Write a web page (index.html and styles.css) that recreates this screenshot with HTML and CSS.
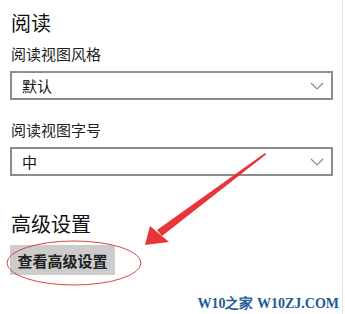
FILE: index.html
```html
<!DOCTYPE html>
<html lang="zh">
<head>
<meta charset="utf-8">
<link rel="stylesheet" href="styles.css">
</head>
<body>
<div class="page">
  <h1 class="heading">阅读</h1>
  <div class="label">阅读视图风格</div>
  <div class="select">
    <span class="value">默认</span>
    <svg class="chev" width="14" height="8" viewBox="0 0 14 8"><polyline points="1,1 7,7 13,1" fill="none" stroke="#8a8a8a" stroke-width="1.2"/></svg>
  </div>
  <div class="label label2">阅读视图字号</div>
  <div class="select">
    <span class="value">中</span>
    <svg class="chev" width="14" height="8" viewBox="0 0 14 8"><polyline points="1,1 7,7 13,1" fill="none" stroke="#8a8a8a" stroke-width="1.2"/></svg>
  </div>
  <h2 class="heading heading2">高级设置</h2>
  <button class="btn">查看高级设置</button>
  <div class="watermark">W10之家 W10ZJ.COM</div>
  <svg class="annot" width="345" height="314" viewBox="0 0 345 314">
    <ellipse cx="74" cy="263" rx="67" ry="22" fill="none" stroke="#d9444a" stroke-width="1"/>
    <polygon points="265,153 266,154.5 162,236 157,230" fill="#e8353a"/>
    <polygon points="145,245 150,226 169,242" fill="#e8353a"/>
  </svg>
  <div class="edge"></div>
</div>
</body>
</html>
```
FILE: styles.css
```css
html, body {
  margin: 0;
  padding: 0;
  background: #ffffff;
}
.page {
  position: relative;
  width: 345px;
  height: 314px;
  overflow: hidden;
  padding: 11px 12px 0 10px;
  box-sizing: border-box;
  font-family: "Noto Sans CJK SC", "Noto Sans", sans-serif;
  color: #1a1a1a;
}
.heading {
  margin: 0 0 0 1px;
  font-size: 20px;
  font-weight: 400;
  line-height: 24px;
  color: #111;
}
.label {
  margin: 9px 0 0 1px;
  font-size: 15px;
  line-height: 20px;
  color: #222;
}
.label2 {
  margin-top: 20px;
}
.select {
  margin-top: 7px;
  height: 29px;
  box-sizing: border-box;
  border: 2px solid #8c8c8c;
  display: flex;
  align-items: center;
  justify-content: space-between;
  padding: 0 7px 0 10px;
}
.value {
  font-size: 15px;
  color: #111;
}
.chev {
  display: block;
}
.heading2 {
  margin-top: 36px;
}
.btn {
  display: block;
  margin-top: 9px;
  width: 105px;
  height: 30px;
  background: #cccccc;
  border: none;
  padding: 0;
  font-family: "Noto Sans CJK SC", sans-serif;
  font-size: 15px;
  font-weight: 700;
  color: #222;
}
.watermark {
  position: absolute;
  right: 6px;
  top: 295px;
  font-family: "Liberation Serif", serif;
  font-weight: 700;
  font-size: 14px;
  color: #1f5a97;
}
.annot {
  position: absolute;
  left: 0;
  top: 0;
  pointer-events: none;
}
.edge {
  position: absolute;
  right: 2px;
  top: 0;
  width: 1px;
  height: 314px;
  background: #e6e6e6;
}
```
